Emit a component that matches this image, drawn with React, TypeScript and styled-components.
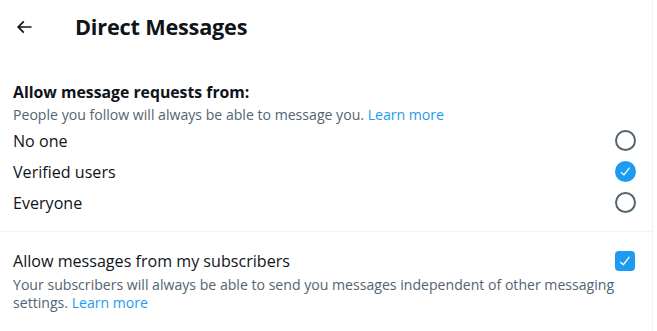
import React from "react";
import styled, { createGlobalStyle } from "styled-components";

const Global = createGlobalStyle`
  html, body { margin: 0; padding: 0; background: #ffffff; }
  body { font-family: "Open Sans", "Noto Sans", "Liberation Sans", sans-serif; color: #0f1419; }
  * { box-sizing: border-box; }
`;

const Column = styled.main`
  width: 653px;
  min-height: 331px;
  border-right: 1px solid #eff3f4;
  display: flex;
  flex-direction: column;
`;

const Header = styled.header`
  height: 53px;
  display: flex;
  align-items: center;
  padding: 0 6px;
`;

const BackButton = styled.button`
  width: 36px;
  height: 36px;
  border: none;
  background: transparent;
  border-radius: 50%;
  padding: 0;
  display: flex;
  align-items: center;
  justify-content: center;
  color: #0f1419;
  cursor: pointer;
`;

const Title = styled.h2`
  margin: 0 0 0 33px;
  font-size: 21.7px;
  line-height: 26px;
  font-weight: 700;
  letter-spacing: -0.2px;
`;

const Section = styled.section<{ $divider?: boolean }>`
  display: flex;
  flex-direction: column;
  padding: ${(p) => (p.$divider ? "19px 13px 0" : "27px 13px 13px")};
  border-top: ${(p) => (p.$divider ? "1px solid #eff3f4" : "none")};
`;

const Heading = styled.h3`
  margin: 0;
  font-size: 15.8px;
  line-height: 24px;
  font-weight: 700;
`;

const Hint = styled.p<{ $lh?: number }>`
  margin: 0;
  font-size: 14.1px;
  line-height: ${(p) => p.$lh ?? 21}px;
  color: #536471;
`;

const Link = styled.a`
  display: inline-block;
  color: #1d9bf0;
  text-decoration: none;
  line-height: inherit;
`;

const OptionRow = styled.label`
  height: 31px;
  display: flex;
  align-items: center;
  justify-content: space-between;
  cursor: pointer;
`;

const OptionText = styled.span`
  font-size: 16.1px;
  line-height: 20px;
`;

const Radio = styled.span<{ $checked?: boolean }>`
  width: 21px;
  height: 21px;
  margin-right: 3px;
  border-radius: 50%;
  border: 2px solid ${(p) => (p.$checked ? "#1d9bf0" : "#536471")};
  background: ${(p) => (p.$checked ? "#1d9bf0" : "transparent")};
  display: flex;
  align-items: center;
  justify-content: center;
`;

const Checkbox = styled.span`
  width: 20px;
  height: 20px;
  margin-right: 4px;
  border-radius: 4px;
  background: #1d9bf0;
  display: flex;
  align-items: center;
  justify-content: center;
`;

const ToggleRow = styled.label`
  display: flex;
  align-items: center;
  justify-content: space-between;
  height: 20px;
`;

const Description = styled(Hint)`
  margin-top: 5px;
  padding-right: 20px;
`;

const Check = ({ size }: { size: number }) => (
  <svg width={size} height={size} viewBox="0 0 24 24" fill="#ffffff" aria-hidden>
    <path d="M9.64 18.952l-5.55-4.861 1.317-1.504 3.951 3.459 8.459-10.948L19.4 6.32 9.64 18.952z" />
  </svg>
);

const options = [
  { label: "No one", checked: false },
  { label: "Verified users", checked: true },
  { label: "Everyone", checked: false },
];

export default function App() {
  return (
    <>
      <Global />
      <Column>
        <Header>
          <BackButton aria-label="Back">
            <svg width="20" height="20" viewBox="0 0 24 24" fill="currentColor" aria-hidden>
              <path d="M7.414 13l5.043 5.04-1.414 1.42L3.586 12l7.457-7.46 1.414 1.42L7.414 11H21v2H7.414z" />
            </svg>
          </BackButton>
          <Title>Direct Messages</Title>
        </Header>
        <Section>
          <Heading>Allow message requests from:</Heading>
          <Hint>
            People you follow will always be able to message you. <Link href="#">Learn more</Link>
          </Hint>
          {options.map((o) => (
            <OptionRow key={o.label}>
              <OptionText>{o.label}</OptionText>
              <Radio $checked={o.checked}>{o.checked && <Check size={15} />}</Radio>
            </OptionRow>
          ))}
        </Section>
        <Section $divider>
          <ToggleRow>
            <OptionText>Allow messages from my subscribers</OptionText>
            <Checkbox>
              <Check size={16} />
            </Checkbox>
          </ToggleRow>
          <Description $lh={18}>
            Your subscribers will always be able to send you messages independent of other messaging
            settings. <Link href="#">Learn more</Link>
          </Description>
        </Section>
      </Column>
    </>
  );
}
